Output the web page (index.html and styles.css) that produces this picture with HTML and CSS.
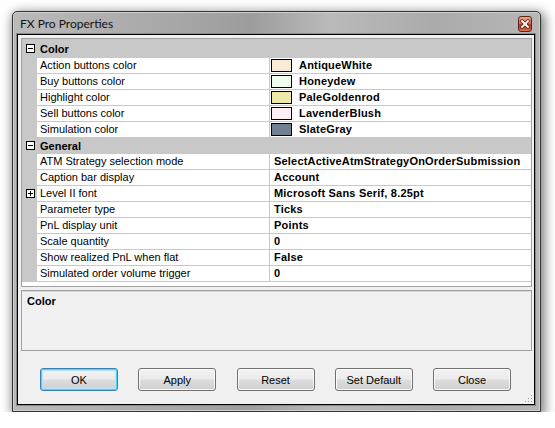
FILE: index.html
```html
<!DOCTYPE html>
<html>
<head>
<meta charset="utf-8">
<title>FX Pro Properties</title>
<link rel="stylesheet" href="styles.css">
</head>
<body>
<div class="window">
  <div class="titlebar">
    <span class="title">FX Pro Properties</span>
    <span class="close">
      <svg width="12" height="10" viewBox="0 0 12 10">
        <path d="M3 2 L9 8 M9 2 L3 8" stroke="#5a2418" stroke-width="3.4" stroke-linecap="square"/>
        <path d="M3 2 L9 8 M9 2 L3 8" stroke="#ffffff" stroke-width="1.8" stroke-linecap="square"/>
      </svg>
    </span>
  </div>
  <div class="client">
    <div class="grid">
      <div class="cat first">
        <span class="margin"><svg class="box" width="9" height="9" viewBox="0 0 9 9"><rect x="0.5" y="0.5" width="8" height="8" fill="#fff" stroke="#000"/><path d="M2 4.5 H7" stroke="#000"/></svg></span>
        <span class="cat-label">Color</span>
      </div>
      <div class="row"><span class="margin"></span><span class="label">Action buttons color</span><span class="value"><span class="swatch sw-antique"></span>AntiqueWhite</span></div>
      <div class="row"><span class="margin"></span><span class="label">Buy buttons color</span><span class="value"><span class="swatch sw-honeydew"></span>Honeydew</span></div>
      <div class="row"><span class="margin"></span><span class="label">Highlight color</span><span class="value"><span class="swatch sw-pale"></span>PaleGoldenrod</span></div>
      <div class="row"><span class="margin"></span><span class="label">Sell buttons color</span><span class="value"><span class="swatch sw-lavender"></span>LavenderBlush</span></div>
      <div class="row"><span class="margin"></span><span class="label">Simulation color</span><span class="value"><span class="swatch sw-slate"></span>SlateGray</span></div>
      <div class="cat">
        <span class="margin"><svg class="box" width="9" height="9" viewBox="0 0 9 9"><rect x="0.5" y="0.5" width="8" height="8" fill="#fff" stroke="#000"/><path d="M2 4.5 H7" stroke="#000"/></svg></span>
        <span class="cat-label">General</span>
      </div>
      <div class="row"><span class="margin"></span><span class="label">ATM Strategy selection mode</span><span class="value text">SelectActiveAtmStrategyOnOrderSubmission</span></div>
      <div class="row"><span class="margin"></span><span class="label">Caption bar display</span><span class="value text">Account</span></div>
      <div class="row"><span class="margin"><svg class="box" width="9" height="9" viewBox="0 0 9 9"><rect x="0.5" y="0.5" width="8" height="8" fill="#fff" stroke="#000"/><path d="M2 4.5 H7 M4.5 2 V7" stroke="#000"/></svg></span><span class="label">Level II font</span><span class="value text">Microsoft Sans Serif, 8.25pt</span></div>
      <div class="row"><span class="margin"></span><span class="label">Parameter type</span><span class="value text">Ticks</span></div>
      <div class="row"><span class="margin"></span><span class="label">PnL display unit</span><span class="value text">Points</span></div>
      <div class="row"><span class="margin"></span><span class="label">Scale quantity</span><span class="value text">0</span></div>
      <div class="row"><span class="margin"></span><span class="label">Show realized PnL when flat</span><span class="value text">False</span></div>
      <div class="row"><span class="margin"></span><span class="label">Simulated order volume trigger</span><span class="value text">0</span></div>
    </div>
    <div class="help">
      <div class="help-title">Color</div>
    </div>
    <div class="buttons">
      <button class="btn default">OK</button>
      <button class="btn">Apply</button>
      <button class="btn">Reset</button>
      <button class="btn">Set Default</button>
      <button class="btn">Close</button>
    </div>
    <svg class="grip" width="8" height="8" viewBox="0 0 8 8">
      <rect x="6" y="0" width="1" height="1" fill="#9a9a9a"/>
      <rect x="3" y="3" width="1" height="1" fill="#9a9a9a"/>
      <rect x="6" y="3" width="1" height="1" fill="#9a9a9a"/>
      <rect x="0" y="6" width="1" height="1" fill="#9a9a9a"/>
      <rect x="3" y="6" width="1" height="1" fill="#9a9a9a"/>
      <rect x="6" y="6" width="1" height="1" fill="#9a9a9a"/>
    </svg>
  </div>
</div>
</body>
</html>
```

FILE: styles.css
```css
html, body {
  margin: 0;
  padding: 0;
  background: #ffffff;
}

body {
  font-family: "Liberation Sans", Arial, sans-serif;
  font-size: 11px;
  color: #000;
}

.window {
  box-sizing: border-box;
  width: 529px;
  margin: 11px 0 0 12px;
  padding: 0 5px 6px 4px;
  border: 1px solid #333;
  border-radius: 5px 5px 0 0;
  background:
    linear-gradient(90deg, rgba(255,255,255,0.10) 0%, rgba(0,0,0,0.06) 30%, rgba(0,0,0,0.12) 45%, rgba(255,255,255,0.10) 60%, rgba(0,0,0,0.04) 80%, rgba(255,255,255,0.06) 100%),
    #b2b2b2;
  box-shadow: inset 0 0 0 1px #d0d0d0, 2px 3px 11px 2px rgba(0,0,0,0.5);
}

.titlebar {
  height: 22px;
  display: flex;
  align-items: flex-start;
  justify-content: space-between;
}

.title {
  font-family: Lato, "Liberation Sans", sans-serif;
  font-size: 12px;
  color: #111;
  padding: 5px 0 0 3px;
  line-height: 14px;
}

.close {
  width: 14px;
  height: 16px;
  box-sizing: border-box;
  margin: 4px 3px 0 0;
  border: 1px solid #5e2216;
  border-radius: 3px;
  background: linear-gradient(#e9a894 0%, #d8735a 45%, #c2391e 52%, #cc5232 85%, #de7c58 100%);
  display: flex;
  align-items: center;
  justify-content: center;
}

.client {
  position: relative;
  height: 369px;
  border: 1px solid #000;
  background: #f0f0f0;
  box-shadow: 0 0 0 1px #8a8a8a;
}

.grid {
  margin: 3px 2px 0 3px;
  border: 1px solid #a0a0a0;
  background: #ffffff;
  padding-bottom: 4px;
}

.row, .cat {
  display: flex;
  height: 16px;
  box-sizing: border-box;
}

.row {
  border-bottom: 1px solid #c8c8c8;
}

.cat {
  background: #c8c8c8;
  align-items: center;
}

.cat.first {
  height: 19px;
  padding-top: 2px;
}

.margin {
  width: 15px;
  flex: none;
  align-self: stretch;
  background: #c8c8c8;
  position: relative;
}

.box {
  position: absolute;
  left: 4px;
  top: 3px;
}

.cat-label {
  padding-left: 3px;
  font-weight: bold;
  line-height: 15px;
}

.label {
  width: 232px;
  flex: none;
  padding-left: 3px;
  box-sizing: border-box;
  line-height: 15px;
  white-space: nowrap;
  overflow: hidden;
}

.value {
  flex: 1;
  border-left: 1px solid #c8c8c8;
  display: flex;
  align-items: center;
  font-weight: bold;
  line-height: 15px;
  white-space: nowrap;
  letter-spacing: 0.2px;
}

.value.text {
  padding-left: 4px;
}

.swatch {
  width: 21px;
  height: 13px;
  box-sizing: border-box;
  border: 1px solid #000;
  margin: 0 7px 0 1px;
}

.sw-antique { background: #faebd7; }
.sw-honeydew { background: #f0fff0; }
.sw-pale { background: #eee8aa; }
.sw-lavender { background: #fff0f5; }
.sw-slate { background: #708090; }

.help {
  margin: 3px 2px 0 3px;
  height: 61px;
  box-sizing: border-box;
  border: 1px solid #a0a0a0;
  box-shadow: inset 0 1px 0 #d8d8d8;
  padding: 3px 5px;
}

.help-title {
  font-weight: bold;
  line-height: 14px;
}

.buttons {
  display: flex;
  gap: 20.25px;
  margin: 17px 0 0 22px;
}

.btn {
  width: 78px;
  height: 23px;
  box-sizing: border-box;
  border: 1px solid #707070;
  border-radius: 3px;
  background: linear-gradient(#f2f2f2 0%, #ebebeb 48%, #dddddd 52%, #cfcfcf 100%);
  box-shadow: inset 0 0 0 1px #fbfbfb;
  font-family: "Liberation Sans", Arial, sans-serif;
  font-size: 11px;
  color: #000;
  padding: 0;
}

.btn.default {
  border-color: #3c7fb1;
  box-shadow: inset 0 0 0 1px #48d8fb, inset 0 0 0 2px #b5e4f7;
}

.grip {
  position: absolute;
  right: 1px;
  bottom: 1px;
}
```
